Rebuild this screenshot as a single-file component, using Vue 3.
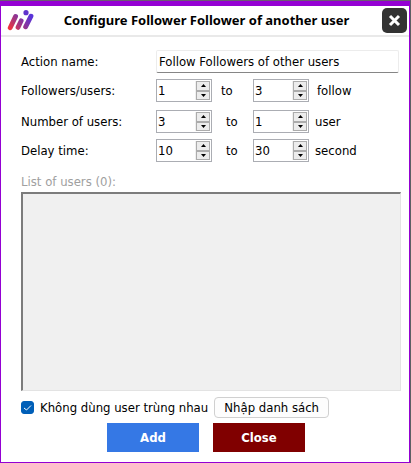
<template>
  <div class="frame">
    <form class="dialog" @submit.prevent>
      <header class="header">
        <svg class="logo" viewBox="0 0 28 22" aria-hidden="true">
          <defs>
            <linearGradient id="logoFill" gradientUnits="userSpaceOnUse" x1="3" y1="19" x2="21" y2="4">
              <stop offset="0" stop-color="#f0343c" />
              <stop offset="0.5" stop-color="#96368c" />
              <stop offset="1" stop-color="#5a34d8" />
            </linearGradient>
          </defs>
          <g stroke="url(#logoFill)" stroke-width="4.8" stroke-linecap="round">
            <path d="M3.2 17.8L8.6 6.4" />
            <path d="M11 17.4L14.2 10.8" />
            <path d="M18.6 16.8L24 6.2" />
          </g>
          <circle cx="19" cy="2.7" r="2.6" fill="#6034cc" />
        </svg>
        <h1 class="title">Configure Follower Follower of another user</h1>
        <button type="button" class="close" aria-label="Close window">
          <svg viewBox="0 0 25 25" aria-hidden="true">
            <path d="M8 8L17 17M17 8L8 17" />
          </svg>
        </button>
      </header>

      <main class="body">
        <div class="row name-row">
          <label class="label" for="action-name">Action name:</label>
          <input id="action-name" v-model="actionName" class="text-input" type="text" />
        </div>

        <div v-for="row in ranges" :key="row.id" :class="['row', row.id]">
          <label class="label" :for="`${row.id}-from`">{{ row.label }}</label>
          <div class="spinner">
            <input :id="`${row.id}-from`" v-model.number="row.from" type="number" />
            <div class="arrows">
              <button type="button" aria-label="Increase" @click="row.from++">
                <svg viewBox="0 0 5 3"><path d="M0 3L2.5 0L5 3Z" /></svg>
              </button>
              <button type="button" aria-label="Decrease" @click="row.from--">
                <svg viewBox="0 0 5 3"><path d="M0 0L2.5 3L5 0Z" /></svg>
              </button>
            </div>
          </div>
          <label class="to" :for="`${row.id}-to`">to</label>
          <div class="spinner">
            <input :id="`${row.id}-to`" v-model.number="row.to" type="number" />
            <div class="arrows">
              <button type="button" aria-label="Increase" @click="row.to++">
                <svg viewBox="0 0 5 3"><path d="M0 3L2.5 0L5 3Z" /></svg>
              </button>
              <button type="button" aria-label="Decrease" @click="row.to--">
                <svg viewBox="0 0 5 3"><path d="M0 0L2.5 3L5 0Z" /></svg>
              </button>
            </div>
          </div>
          <span class="unit">{{ row.unit }}</span>
        </div>

        <label class="list-label" for="user-list">List of users (0):</label>
        <textarea id="user-list" class="list" disabled></textarea>

        <div class="options">
          <label class="check">
            <input v-model="unique" type="checkbox" />
            <svg viewBox="0 0 13 13" aria-hidden="true"><path d="M3 7L5.5 9L10 4.5" /></svg>
            <span>Không dùng user trùng nhau</span>
          </label>
          <button type="button" class="import">Nhập danh sách</button>
        </div>

        <div class="actions">
          <button type="submit" class="action add">Add</button>
          <button type="button" class="action cancel">Close</button>
        </div>
      </main>
    </form>
  </div>
</template>

<script setup>
import { ref } from 'vue'

const actionName = ref('Follow Followers of other users')
const unique = ref(true)

const ranges = ref([
  { id: 'followers', label: 'Followers/users:', from: 1, to: 3, unit: 'follow' },
  { id: 'users', label: 'Number of users:', from: 3, to: 1, unit: 'user' },
  { id: 'delay', label: 'Delay time:', from: 10, to: 30, unit: 'second' }
])
</script>

<style>
body {
  margin: 0;
  background: #fff;
}
</style>

<style scoped>
.frame {
  border-top: 1px solid #6b5b73;
  border-right: 1px solid #5f6064;
  box-sizing: border-box;
  min-height: 100vh;
  display: flex;
  font-family: 'DejaVu Sans Condensed', 'Noto Sans', sans-serif;
  font-size: 13px;
  line-height: 16px;
  color: #000;
}

.dialog {
  flex: 1;
  min-width: 0;
  display: flex;
  flex-direction: column;
  background: #fff;
  border: 1px solid #9400d3;
  border-top-width: 5px;
}

input,
button,
textarea {
  box-sizing: border-box;
  margin: 0;
  font: inherit;
  color: inherit;
}

button {
  padding: 0;
  cursor: pointer;
}

.header {
  display: flex;
  align-items: center;
  height: 29px;
  padding: 0 2px 0 6px;
  border-bottom: 2px solid #e9e9e9;
}

.logo {
  width: 28px;
  height: 22px;
  fill: none;
}

.title {
  flex: 1;
  margin: 0;
  padding: 0 4px 2px 0;
  font-family: 'Noto Sans', sans-serif;
  font-size: 13px;
  font-weight: bold;
  text-align: center;
  white-space: nowrap;
}

.close {
  width: 25px;
  height: 25px;
  border: 0;
  border-radius: 5px;
  background: #333;
}

.close svg {
  display: block;
  fill: none;
  stroke: #fff;
  stroke-width: 3;
}

.body {
  flex: 1;
  display: flex;
  flex-direction: column;
  padding: 13px 8px 10px 20px;
}

.row {
  display: flex;
  align-items: center;
  height: 23px;
  margin-bottom: 6px;
}

.name-row {
  padding-right: 2px;
}

.row.followers {
  margin-bottom: 8px;
}

.row.delay {
  margin-bottom: 12px;
}

.label {
  width: 135px;
  flex: none;
}

.text-input {
  flex: 1;
  min-width: 0;
  height: 23px;
  padding: 0 2px;
  border: 1px solid #ececec;
  border-bottom-color: #868686;
  border-radius: 2px;
  background: #fff;
  outline: none;
}

.spinner {
  display: flex;
  box-sizing: border-box;
  width: 56px;
  height: 23px;
  flex: none;
  padding: 1px;
  border: 1px solid #abadb3;
  background: #fff;
}

.spinner input {
  flex: 1;
  min-width: 0;
  padding: 0;
  border: 0;
  background: none;
  outline: none;
  appearance: textfield;
}

.spinner input::-webkit-inner-spin-button {
  appearance: none;
  margin: 0;
}

.arrows {
  display: flex;
  flex-direction: column;
  width: 15px;
  padding-left: 1px;
  box-sizing: border-box;
  background: #f0f0f0;
}

.arrows button {
  display: flex;
  flex: 1;
  align-items: center;
  justify-content: center;
  border: 1px solid #acacac;
  background: #ececec;
}

.arrows svg {
  width: 5px;
  height: 3px;
  fill: #000;
}

.to {
  box-sizing: border-box;
  width: 41px;
  padding-left: 14px;
}

.followers .to {
  padding-left: 9px;
}

.unit {
  padding-left: 6px;
}

.followers .unit {
  padding-left: 8px;
}

.list-label {
  margin-bottom: 2px;
  color: #a0a0a0;
}

.list {
  display: block;
  width: 100%;
  flex: 1;
  min-height: 199px;
  border: 2px solid;
  border-color: #7c7c7c #e3e3e3 #e3e3e3 #7c7c7c;
  border-right-width: 1px;
  border-bottom-width: 1px;
  background: #f0f0f0;
  resize: none;
}

.options {
  display: flex;
  align-items: center;
  gap: 6px;
  margin-top: 6px;
}

.check {
  display: grid;
  grid-template-columns: 13px auto;
  align-items: center;
  column-gap: 6px;
  white-space: nowrap;
}

.check input,
.check svg {
  grid-area: 1 / 1;
  width: 13px;
  height: 13px;
}

.check input {
  appearance: none;
  border: 1px solid #005fb8;
  border-radius: 3px;
  background: #fff;
}

.check input:checked {
  background: #005fb8;
}

.check svg {
  fill: none;
  stroke: #fff;
  stroke-width: 1;
  pointer-events: none;
}

.import {
  width: 115px;
  height: 21px;
  border: 1px solid #d0d0d0;
  border-radius: 4px;
  background: #fdfdfd;
}

.actions {
  display: flex;
  gap: 14px;
  margin-top: 5px;
  padding-left: 86px;
}

.action {
  width: 92px;
  height: 29px;
  border: 0;
  color: #fff;
  font-size: 13px;
  font-weight: bold;
}

.add {
  background: #3578e5;
}

.cancel {
  background: #800000;
}
</style>
